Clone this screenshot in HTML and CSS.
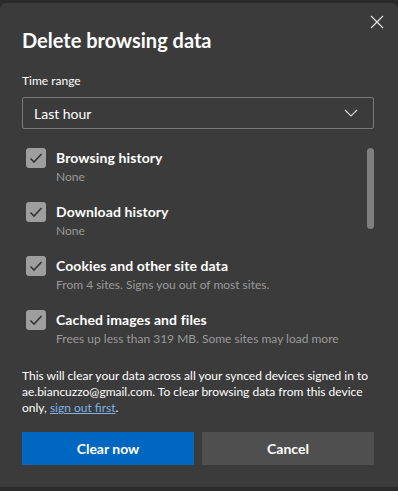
FILE: index.html
```html
<!DOCTYPE html>
<html>
<head>
<meta charset="utf-8">
<link rel="stylesheet" href="styles.css">
</head>
<body>
<div class="dialog">
  <button class="close" aria-label="Close">
    <svg width="14" height="14" viewBox="0 0 14 14"><path d="M1 1 L13 13 M13 1 L1 13" stroke="#e6e6e6" stroke-width="1.2" fill="none"/></svg>
  </button>
  <h1 class="title">Delete browsing data</h1>
  <div class="field-label">Time range</div>
  <div class="select">
    <span>Last hour</span>
    <svg width="14" height="8" viewBox="0 0 14 8"><path d="M1 1 L7 7 L13 1" stroke="#d6d6d6" stroke-width="1.2" fill="none"/></svg>
  </div>
  <div class="list-wrap">
    <div class="list">
      <div class="item">
        <span class="box"><svg width="14" height="12" viewBox="0 0 14 12"><path d="M1.5 6.5 L5 10 L12.5 2" stroke="#333" stroke-width="1.6" fill="none"/></svg></span>
        <div class="text"><div class="name">Browsing history</div><div class="desc">None</div></div>
      </div>
      <div class="item">
        <span class="box"><svg width="14" height="12" viewBox="0 0 14 12"><path d="M1.5 6.5 L5 10 L12.5 2" stroke="#333" stroke-width="1.6" fill="none"/></svg></span>
        <div class="text"><div class="name">Download history</div><div class="desc">None</div></div>
      </div>
      <div class="item">
        <span class="box"><svg width="14" height="12" viewBox="0 0 14 12"><path d="M1.5 6.5 L5 10 L12.5 2" stroke="#333" stroke-width="1.6" fill="none"/></svg></span>
        <div class="text"><div class="name">Cookies and other site data</div><div class="desc">From 4 sites. Signs you out of most sites.</div></div>
      </div>
      <div class="item">
        <span class="box"><svg width="14" height="12" viewBox="0 0 14 12"><path d="M1.5 6.5 L5 10 L12.5 2" stroke="#333" stroke-width="1.6" fill="none"/></svg></span>
        <div class="text"><div class="name">Cached images and files</div><div class="desc">Frees up less than 319 MB. Some sites may load more</div></div>
      </div>
    </div>
    <div class="scroll"><div class="thumb"></div></div>
  </div>
  <p class="info">This will clear your data across all your synced devices signed in to ae.biancuzzo@gmail.com. To clear browsing data from this device only, <a href="#">sign out first</a>.</p>
  <div class="buttons">
    <button class="btn primary">Clear now</button>
    <button class="btn secondary">Cancel</button>
  </div>
</div>
</body>
</html>
```
FILE: styles.css
```css
html, body {
  margin: 0;
  padding: 0;
  background: #2b2b2b;
  height: 491px;
  overflow: hidden;
}
body {
  font-family: "Lato", "Noto Sans", sans-serif;
  color: #ffffff;
}
.dialog {
  position: relative;
  margin-top: 3px;
  height: 484px;
  box-sizing: border-box;
  background: #3b3b3b;
  border-radius: 6px 6px 0 0;
  padding: 0 24px 0 22px;
  overflow: hidden;
}
.close {
  position: absolute;
  top: 12px;
  right: 14px;
  width: 14px;
  height: 14px;
  padding: 0;
  border: 0;
  background: none;
  display: flex;
}
.title {
  margin: 0;
  padding-top: 23px;
  font-size: 20px;
  line-height: 28px;
  font-weight: 700;
}
.field-label {
  margin-top: 19px;
  font-size: 12px;
  line-height: 16px;
}
.select {
  margin-top: 8px;
  height: 32px;
  box-sizing: border-box;
  border: 1px solid #7a7a7a;
  border-radius: 2px;
  display: flex;
  align-items: center;
  justify-content: space-between;
  padding: 0 15px 0 11px;
  font-size: 14px;
}
.list-wrap {
  margin-top: 19px;
  height: 212px;
  display: flex;
  overflow: hidden;
}
.list {
  flex: 1;
  padding-left: 4px;
}
.item {
  display: flex;
  gap: 10px;
  height: 54px;
}
.box {
  width: 20px;
  height: 20px;
  border-radius: 3px;
  background: #9e9e9e;
  display: flex;
  align-items: center;
  justify-content: center;
  flex: none;
}
.name {
  font-size: 14px;
  font-weight: 700;
  line-height: 19px;
  letter-spacing: 0.1px;
}
.desc {
  font-size: 12px;
  line-height: 19px;
  color: #9a9a9a;
  white-space: nowrap;
}
.scroll {
  width: 7px;
  flex: none;
}
.thumb {
  height: 81px;
  border-radius: 4px;
  background: #7f7f7f;
}
.info {
  margin: 8px 0 0;
  font-size: 12px;
  line-height: 16px;
}
.info a {
  color: #7fb2e5;
  text-decoration: underline;
}
.buttons {
  margin-top: 16px;
  display: flex;
  gap: 8px;
}
.btn {
  flex: 1;
  height: 33px;
  border: 0;
  border-radius: 0;
  font-family: inherit;
  font-size: 14px;
  font-weight: 700;
  color: #ffffff;
}
.primary {
  background: #0067c0;
}
.secondary {
  background: #4f4f4f;
}
```
